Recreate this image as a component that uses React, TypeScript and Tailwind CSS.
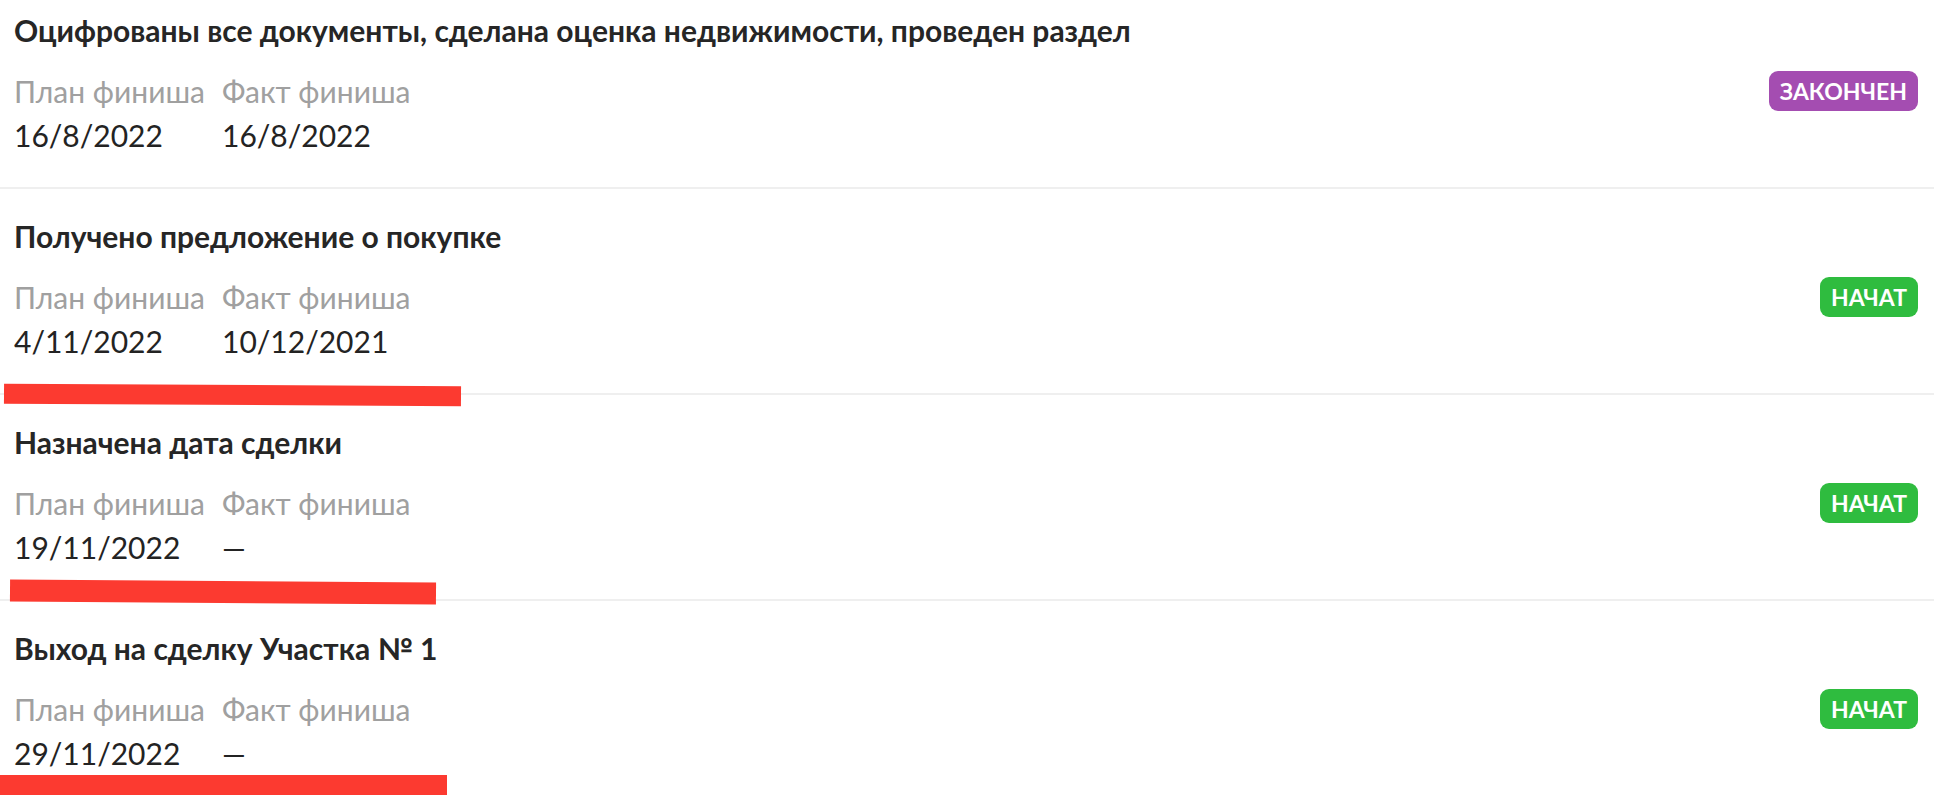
import React from "react";

type Stage = {
  title: string;
  plan: string;
  fact: string;
  status: "done" | "started";
  mark?: string; // classes for the red marker drawn under the row
};

const stages: Stage[] = [
  {
    title: "Оцифрованы все документы, сделана оценка недвижимости, проведен раздел",
    plan: "16/8/2022",
    fact: "16/8/2022",
    status: "done",
  },
  {
    title: "Получено предложение о покупке",
    plan: "4/11/2022",
    fact: "10/12/2021",
    status: "started",
    mark: "left-[4px] top-[196px] w-[457px] h-[20px] rotate-[0.3deg]",
  },
  {
    title: "Назначена дата сделки",
    plan: "19/11/2022",
    fact: "—",
    status: "started",
    mark: "left-[10px] top-[186px] w-[426px] h-[22px] rotate-[0.4deg]",
  },
  {
    title: "Выход на сделку Участка № 1",
    plan: "29/11/2022",
    fact: "—",
    status: "started",
    mark: "left-0 top-[174px] w-[447px] h-[26px]",
  },
];

function Badge({ status }: { status: Stage["status"] }) {
  const done = status === "done";
  return (
    <span
      className={
        "mt-[2px] inline-flex h-[40px] items-center rounded-[9px] px-[11px] text-[23px] font-bold leading-none text-white " +
        (done ? "bg-[#a44db1]" : "bg-[#2fbc3f]")
      }
    >
      {done ? "ЗАКОНЧЕН" : "НАЧАТ"}
    </span>
  );
}

function Row({ stage, first }: { stage: Stage; first: boolean }) {
  return (
    <div
      className={
        "relative pl-[14px] pr-[16px] pb-[30px] " +
        (first ? "pt-[12px]" : "border-t-2 border-[#efefef] pt-[29px]")
      }
    >
      <div className="text-[30px] font-bold leading-[36px] text-[#262626]">{stage.title}</div>

      <div className="mt-[21px] flex items-start justify-between">
        <div className="flex gap-[18px]">
          <div className="flex w-[190px] flex-col whitespace-nowrap">
            <span className="text-[30px] leading-[44px] text-[#a0a0a0]">План финиша</span>
            <span className="text-[30px] leading-[44px] text-[#232323]">{stage.plan}</span>
          </div>
          <div className="flex flex-col whitespace-nowrap">
            <span className="text-[30px] leading-[44px] text-[#a0a0a0]">Факт финиша</span>
            <span className="text-[30px] leading-[44px] text-[#232323]">{stage.fact}</span>
          </div>
        </div>
        <Badge status={stage.status} />
      </div>

      {/* hand-drawn red marker over the screenshot */}
      {stage.mark && <div className={"absolute z-10 bg-[#fc3a30] " + stage.mark} />}
    </div>
  );
}

export default function App() {
  return (
    <div className="h-screen overflow-hidden bg-white font-['Lato',sans-serif]">
      {stages.map((s, i) => (
        <Row key={i} stage={s} first={i === 0} />
      ))}
    </div>
  );
}
